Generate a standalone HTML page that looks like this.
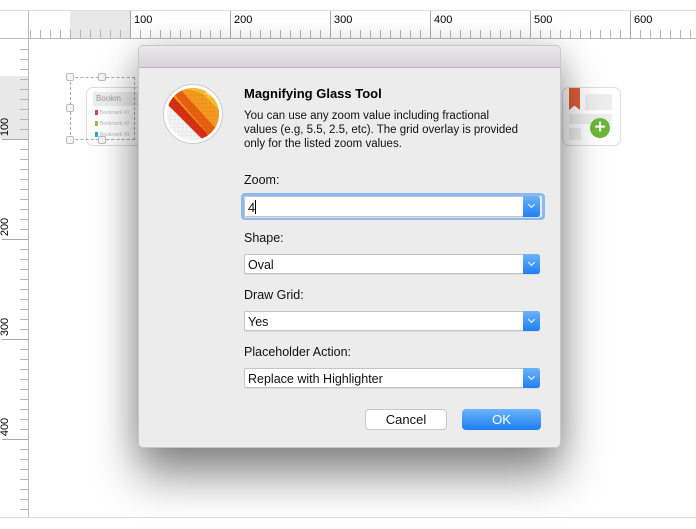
<!DOCTYPE html>
<html><head><style>
*{margin:0;padding:0;box-sizing:border-box}
body{width:696px;height:529px;background:#fff;position:relative;overflow:hidden;font-family:"Liberation Sans",sans-serif}
.a{position:absolute}
.lbl{font-size:12.5px;color:#111}
.sel{position:absolute;left:244px;width:296px;height:20px;background:#fff;border:1px solid #c4c4c4;border-radius:2px;font-size:12.5px;color:#111;padding:3px 0 0 3px;box-shadow:0 1px 0 #ddd}
.sel .ar{position:absolute;right:-1px;top:-1px;width:17px;height:20px;background:linear-gradient(#6cb3fa,#1e7ff3);border-radius:0 3px 3px 0}
.sel .ar:after{content:"";position:absolute;left:6px;top:6px;width:4px;height:4px;border-right:1.5px solid #fff;border-bottom:1.5px solid #fff;transform:rotate(45deg)}
.rn{position:absolute;font-size:11px;color:#000}
.bm{position:absolute;left:100px;font-size:5px;color:#bbb}
</style></head><body>
<!-- rulers -->
<div class="a" style="left:0;top:10px;width:696px;height:1px;background:#ddd"></div>
<div class="a" style="left:70px;top:11px;width:60px;height:27px;background:#e8e8e8"></div>
<div class="a" style="left:0;top:76px;width:28px;height:63px;background:#e8e8e8"></div>
<div class="a" style="left:30px;top:30px;width:666px;height:8px;background:repeating-linear-gradient(to right,#b5b5b5 0 1px,transparent 1px 10px)"></div>
<div class="a" style="left:0;top:38px;width:696px;height:1px;background:#bbb"></div>
<div class="a" style="left:20px;top:49px;width:8px;height:470px;background:repeating-linear-gradient(to bottom,#b5b5b5 0 1px,transparent 1px 10px)"></div>
<div class="a" style="left:28px;top:11px;width:1px;height:506px;background:#bbb"></div>
<div class="a" style="left:0;top:517px;width:696px;height:1px;background:#ddd"></div>
<div class="a" style="left:130px;top:11px;width:1px;height:27px;background:#aaa"></div>
<div class="a" style="left:230px;top:11px;width:1px;height:27px;background:#aaa"></div>
<div class="a" style="left:330px;top:11px;width:1px;height:27px;background:#aaa"></div>
<div class="a" style="left:430px;top:11px;width:1px;height:27px;background:#aaa"></div>
<div class="a" style="left:530px;top:11px;width:1px;height:27px;background:#aaa"></div>
<div class="a" style="left:630px;top:11px;width:1px;height:27px;background:#aaa"></div>
<div class="rn" style="left:134px;top:14px">100</div>
<div class="rn" style="left:234px;top:14px">200</div>
<div class="rn" style="left:334px;top:14px">300</div>
<div class="rn" style="left:434px;top:14px">400</div>
<div class="rn" style="left:534px;top:14px">500</div>
<div class="rn" style="left:634px;top:14px">600</div>
<div class="a" style="left:2px;top:139px;width:26px;height:1px;background:#aaa"></div>
<div class="a" style="left:2px;top:239px;width:26px;height:1px;background:#aaa"></div>
<div class="a" style="left:2px;top:339px;width:26px;height:1px;background:#aaa"></div>
<div class="a" style="left:2px;top:439px;width:26px;height:1px;background:#aaa"></div>
<div class="rn" style="left:-4px;top:121px;transform:rotate(-90deg)">100</div>
<div class="rn" style="left:-4px;top:221px;transform:rotate(-90deg)">200</div>
<div class="rn" style="left:-4px;top:321px;transform:rotate(-90deg)">300</div>
<div class="rn" style="left:-4px;top:421px;transform:rotate(-90deg)">400</div>
<!-- canvas widgets -->
<div class="a" style="left:86px;top:87px;width:60px;height:59px;border:1px solid #ddd;border-radius:7px;background:#fff"></div>
<div class="a" style="left:93px;top:92px;width:45px;height:14px;background:#eee;font-size:8px;color:#999;padding:2px 3px">Bookm</div>
<div class="a" style="left:95px;top:110px;width:3px;height:5px;background:#e04050"></div>
<div class="a" style="left:95px;top:121px;width:3px;height:5px;background:#9cc040"></div>
<div class="a" style="left:95px;top:132px;width:3px;height:5px;background:#30a8e0"></div>
<div class="bm" style="top:110px">Bookmark #1</div>
<div class="bm" style="top:121px">Bookmark #2</div>
<div class="bm" style="top:132px">Bookmark #3</div>
<div class="a" style="left:70px;top:77px;width:65px;height:63px;border:1px dashed #aaa"></div>
<div class="a" style="left:66px;top:73px;width:8px;height:8px;border:1px solid #bbb;background:#f4f4f4;border-radius:2px"></div>
<div class="a" style="left:98px;top:73px;width:8px;height:8px;border:1px solid #bbb;background:#f4f4f4;border-radius:2px"></div>
<div class="a" style="left:66px;top:104px;width:8px;height:8px;border:1px solid #bbb;background:#f4f4f4;border-radius:2px"></div>
<div class="a" style="left:66px;top:136px;width:8px;height:8px;border:1px solid #bbb;background:#f4f4f4;border-radius:2px"></div>
<div class="a" style="left:98px;top:136px;width:8px;height:8px;border:1px solid #bbb;background:#f4f4f4;border-radius:2px"></div>
<div class="a" style="left:562px;top:87px;width:59px;height:59px;border:1px solid #ddd;border-radius:7px;background:#fff"></div>
<div class="a" style="left:569px;top:88px;width:11px;height:22px;background:#e0603a;clip-path:polygon(0 0,100% 0,100% 100%,50% 80%,0 100%)"></div>
<div class="a" style="left:585px;top:94px;width:27px;height:16px;background:#eee"></div>
<div class="a" style="left:569px;top:114px;width:43px;height:10px;background:#eee"></div>
<div class="a" style="left:569px;top:128px;width:12px;height:12px;background:#eee"></div>
<div class="a" style="left:590px;top:118px;width:20px;height:20px;border-radius:50%;background:#6cb838;color:#fff;font:bold 19px/20px 'Liberation Sans';text-align:center">+</div>
<!-- dialog -->
<div class="a" style="left:138px;top:45px;width:423px;height:403px;background:#ececec;border:1px solid #c8c8c8;border-radius:5px;box-shadow:0 28px 45px rgba(0,0,0,.45),0 0 30px rgba(0,0,0,.15)"></div>
<div class="a" style="left:139px;top:46px;width:421px;height:22px;background:linear-gradient(#ebe9eb,#d6d4d6);border-bottom:1px solid #b8b8b8;border-radius:5px 5px 0 0"></div>
<svg class="a" style="left:163px;top:84px" width="60" height="60" viewBox="0 0 60 60">
<defs><clipPath id="c"><circle cx="30" cy="30" r="26"/></clipPath>
<pattern id="g" width="4" height="4" patternUnits="userSpaceOnUse"><path d="M4 0V4M0 4H4" stroke="rgba(0,0,0,.08)" stroke-width="1" fill="none"/></pattern></defs>
<circle cx="30" cy="30" r="29.5" fill="#fff" stroke="#ccc"/>
<g clip-path="url(#c)">
<rect width="60" height="60" fill="#f4f4f4"/>
<polygon points="0,0 60,0 60,60 44,60 0,14" fill="#f59a20"/>
<polygon points="10,0 60,0 60,30 40,10" fill="#f7c030"/>
<polygon points="36,0 56,0 60,4 60,20 44,10" fill="#fbe6a8"/>
<polygon points="0,8 6,8 50,56 50,60 44,60 0,16" fill="#d83010"/>
<polygon points="6,4 16,4 56,48 56,60 50,60 50,56" fill="#e86010"/>
<rect width="60" height="60" fill="url(#g)"/>
</g>
</svg>
<div class="a" style="left:244px;top:86px;font-weight:bold;font-size:13px;color:#000">Magnifying Glass Tool</div>
<div class="a" style="left:244px;top:109px;white-space:nowrap;font-size:11.5px;line-height:14px;color:#111">You can use any zoom value including fractional<br>values (e.g, 5.5, 2.5, etc). The grid overlay is provided<br>only for the listed zoom values.</div>
<div class="a lbl" style="left:244px;top:173px">Zoom:</div>
<div class="a" style="left:241px;top:193px;width:304px;height:27px;border:3px solid #8cb9f0;border-radius:4px"></div>
<div class="sel" style="top:196px;height:21px;font-size:13px">4<span style="display:inline-block;width:1px;height:14px;background:#000;vertical-align:-2px"></span><div class="ar" style="height:21px"></div></div>
<div class="a lbl" style="left:244px;top:231px">Shape:</div>
<div class="sel" style="top:254px">Oval<div class="ar"></div></div>
<div class="a lbl" style="left:244px;top:288px">Draw Grid:</div>
<div class="sel" style="top:311px">Yes<div class="ar"></div></div>
<div class="a lbl" style="left:244px;top:345px">Placeholder Action:</div>
<div class="sel" style="top:368px">Replace with Highlighter<div class="ar"></div></div>
<div class="a" style="left:365px;top:409px;width:82px;height:21px;background:#fff;border:1px solid #c8c8c8;border-radius:4px;font-size:13px;text-align:center;line-height:19px;color:#111">Cancel</div>
<div class="a" style="left:462px;top:409px;width:79px;height:21px;background:linear-gradient(#6cb4fb,#1b7ef4);border-radius:4px;font-size:13px;text-align:center;line-height:21px;color:#fff">OK</div>
</body></html>
